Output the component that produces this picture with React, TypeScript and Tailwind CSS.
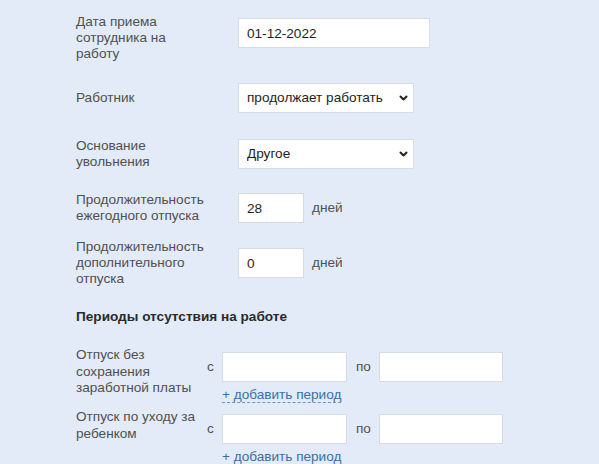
import React from "react";

const font = { fontFamily: '"Liberation Sans", Arial, sans-serif' };

function Chevron() {
  return (
    <svg
      className="pointer-events-none absolute right-[6px] top-1/2 -translate-y-1/2"
      width="9"
      height="6"
      viewBox="0 0 9 6"
    >
      <path d="M1.5 1.5 L4.5 4.5 L7.5 1.5" fill="none" stroke="#222" strokeWidth="2" strokeLinecap="round" strokeLinejoin="round" />
    </svg>
  );
}

function TextInput({ w, value = "" }: { w: string; value?: string }) {
  return (
    <input
      readOnly
      value={value}
      className={`${w} h-[30px] shrink-0 border border-[#d6dce4] bg-white px-[8px] text-[13.6px] text-[#1e1e1e] outline-none`}
      style={font}
    />
  );
}

function Select({ value }: { value: string }) {
  return (
    <div className="relative h-[30px] w-[176px] shrink-0">
      <select
        className="h-[30px] w-[176px] appearance-none border border-[#d6dce4] bg-white pl-[8px] pr-[20px] text-[13.6px] text-[#1e1e1e] outline-none"
        style={font}
        defaultValue={value}
      >
        <option>{value}</option>
      </select>
      <Chevron />
    </div>
  );
}

function AddLink() {
  return (
    <div className="ml-[15px] leading-[15px]">
      <span className="inline-block border-b border-dashed border-[#6d94c2] text-[13.6px] leading-[15px] text-[#3c6fa8]">
        + добавить период
      </span>
    </div>
  );
}

function PeriodRow({ label, mt }: { label: string; mt: string }) {
  return (
    <div className={`flex items-start ${mt}`}>
      <div className="w-[131px] shrink-0 leading-[16.5px] text-[#505050]">{label}</div>
      <div className="mt-[5px] flex flex-col">
        <div className="flex items-center">
          <span className="w-[15px] text-[#505050]">с</span>
          <TextInput w="w-[125px]" />
          <span className="w-[32px] pl-[9px] text-[#505050]">по</span>
          <TextInput w="w-[124px]" />
        </div>
        <div className="mt-[5px]">
          <AddLink />
        </div>
      </div>
    </div>
  );
}

export default function App() {
  return (
    <div className="min-h-[464px] w-full bg-[#e2ebf7] pl-[76px] pt-[14px] text-[13.6px]" style={font}>
      <div className="flex items-start">
        <div className="mr-[27px] w-[135px] shrink-0 leading-[16px] text-[#505050]">Дата приема сотрудника на работу</div>
        <div className="mt-[4px]">
          <TextInput w="w-[192px]" value="01-12-2022" />
        </div>
      </div>

      <div className="mt-[21px] flex items-center">
        <div className="mr-[27px] w-[135px] shrink-0 leading-[16px] text-[#505050]">Работник</div>
        <Select value="продолжает работать" />
      </div>

      <div className="mt-[25px] flex items-center">
        <div className="mr-[27px] w-[135px] shrink-0 leading-[16px] text-[#505050]">Основание увольнения</div>
        <Select value="Другое" />
      </div>

      <div className="mt-[22px] flex items-center">
        <div className="mr-[27px] w-[135px] shrink-0 leading-[16px] text-[#505050]">Продолжительность ежегодного отпуска</div>
        <TextInput w="w-[66px]" value="28" />
        <span className="ml-[8px] text-[#505050]">дней</span>
      </div>

      <div className="mt-[15px] flex items-center">
        <div className="mr-[27px] w-[135px] shrink-0 leading-[16px] text-[#505050]">Продолжительность дополнительного отпуска</div>
        <TextInput w="w-[66px]" value="0" />
        <span className="ml-[8px] text-[#505050]">дней</span>
      </div>

      <div className="mt-[22px] font-bold leading-[16px] text-[#2a2a2a]">Периоды отсутствия на работе</div>

      <PeriodRow label="Отпуск без сохранения заработной платы" mt="mt-[22px]" />
      <PeriodRow label="Отпуск по уходу за ребенком" mt="mt-[6px]" />
    </div>
  );
}
